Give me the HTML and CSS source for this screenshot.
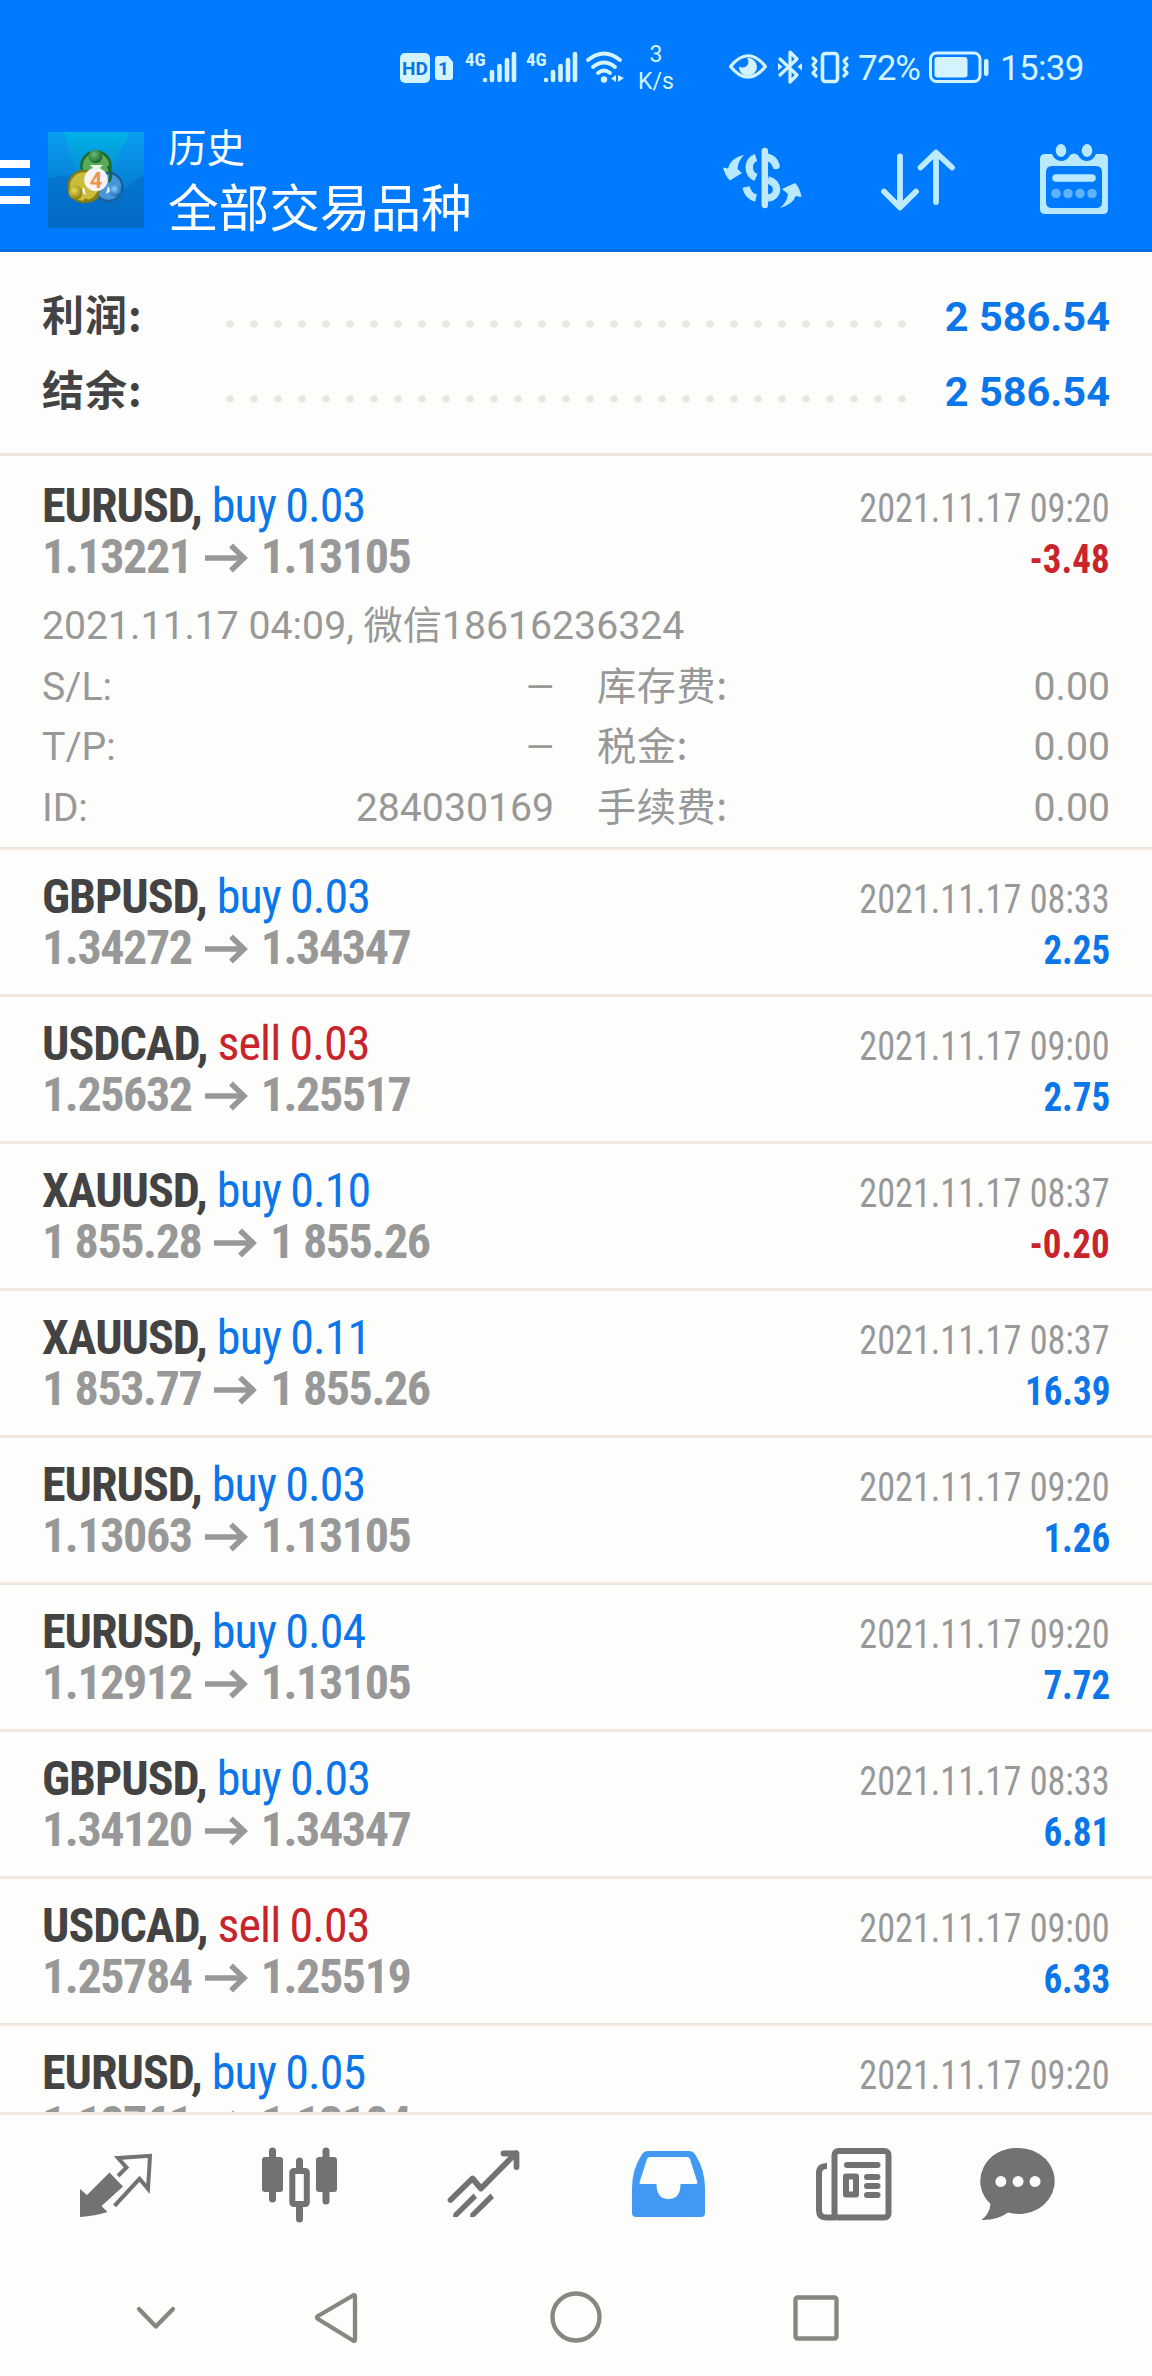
FILE: index.html
```html
<!DOCTYPE html>
<html lang="zh-CN">
<head>
<meta charset="utf-8">
<title>历史</title>
<link rel="stylesheet" href="styles.css">
</head>
<body>
<div class="screen">
  <header class="header">
    <div class="status">
      <svg class="st-sim" width="56" height="34" viewBox="399 52 56 34">
        <rect x="400" y="53" width="30" height="30" rx="5" fill="#d3f4ff"/>
        <path d="M437 56h11l5 6v15a3 3 0 0 1-3 3h-12a3 3 0 0 1-3-3V59a3 3 0 0 1 2-3z" fill="#d3f4ff"/>
        <text x="415" y="75" class="st-hd" text-anchor="middle">HD</text>
        <text x="443.500" y="75" class="st-hd" text-anchor="middle">1</text>
      </svg>
      <svg class="st-cell" width="53" height="34" viewBox="465 51 53 34">
        <text x="465" y="65.500" class="st-4g">4G</text>
        <path d="M485 80v0M492 72v8M499.500 66v14M507 60v20M514 54v26" stroke="#d3f4ff" stroke-width="4.600" stroke-linecap="round"/>
      </svg>
      <svg class="st-cell2" width="53" height="34" viewBox="465 51 53 34">
        <text x="465" y="65.500" class="st-4g">4G</text>
        <path d="M485 80v0M492 72v8M499.500 66v14M507 60v20M514 54v26" stroke="#d3f4ff" stroke-width="4.600" stroke-linecap="round"/>
      </svg>
      <svg class="st-wifi" width="40" height="34" viewBox="585 50 40 34">
        <path d="M588 60Q604 47 620 60M593 67Q604 58 615 67M598 73Q604 68 610 73" fill="none" stroke="#d3f4ff" stroke-width="3.800" stroke-linecap="round"/>
        <circle cx="604" cy="79.500" r="3.200" fill="#d3f4ff"/>
        <path d="M616 75v7l-5-3.500zM618 75v7l6-4z" fill="#d3f4ff"/>
      </svg>
      <div class="st-speed"><span>3</span><span>K/s</span></div>
      <svg class="st-eye" width="40" height="30" viewBox="728 52 40 30">
        <path d="M730.500 66.500Q748 45 765.500 66.500Q748 88 730.500 66.500z" fill="none" stroke="#d3f4ff" stroke-width="3.200" stroke-linejoin="round"/>
        <path d="M747 58a9 9 0 1 1-8 8c3 3 8 1 9-2 .800-2 .500-4-1-6z" fill="#d3f4ff"/>
      </svg>
      <svg class="st-bt" width="26" height="36" viewBox="777 49 26 36">
        <path d="M780 59l17 16-7 7V52l7 7-17 16" fill="none" stroke="#d3f4ff" stroke-width="3.200" stroke-linejoin="round" stroke-linecap="round"/>
        <path d="M778 63l4.500 3.800-4.500 3.800zM802 63l-4.500 3.800 4.500 3.800z" fill="#d3f4ff"/>
      </svg>
      <svg class="st-vib" width="40" height="34" viewBox="810 50 40 34">
        <rect x="822.500" y="53.500" width="15" height="28" rx="3" fill="none" stroke="#d3f4ff" stroke-width="3.600"/>
        <path d="M813 58l3 3-3 4 3 4-3 4 3 3M847 58l-3 3 3 4-3 4 3 4-3 3" fill="none" stroke="#d3f4ff" stroke-width="3.200" stroke-linecap="round" stroke-linejoin="round"/>
      </svg>
      <span class="st-pct">72%</span>
      <svg class="st-bat" width="62" height="34" viewBox="927 50 62 34">
        <rect x="929.500" y="53" width="49.500" height="28.500" rx="6" fill="none" stroke="#d3f4ff" stroke-width="3"/>
        <rect x="933.500" y="57" width="33" height="20.500" rx="3" fill="#d3f4ff"/>
        <rect x="983" y="59" width="4.500" height="17" rx="2" fill="#d3f4ff"/>
      </svg>
      <span class="st-time">15:39</span>
    </div>
    <div class="toolbar">
      <div class="menu"><i></i><i></i><i></i></div>
      <svg class="logo" width="96" height="96" viewBox="0 0 96 96">
        <defs>
          <linearGradient id="bg" x1="0" y1="0" x2="0" y2="1"><stop offset="0" stop-color="#0a9df0"/><stop offset=".5" stop-color="#0684d8"/><stop offset="1" stop-color="#0268c8"/></linearGradient>
          <linearGradient id="ray" x1="0" y1="0" x2="0" y2="1"><stop offset="0" stop-color="#00b2ea"/><stop offset="1" stop-color="#0790cf"/></linearGradient>
          <radialGradient id="gn" cx=".4" cy=".35" r=".7"><stop offset="0" stop-color="#6fbc74"/><stop offset="1" stop-color="#125f28"/></radialGradient>
          <radialGradient id="yl" cx=".4" cy=".35" r=".7"><stop offset="0" stop-color="#e8dc5c"/><stop offset="1" stop-color="#857606"/></radialGradient>
          <radialGradient id="bl" cx=".4" cy=".35" r=".7"><stop offset="0" stop-color="#8ccdff"/><stop offset="1" stop-color="#0c64b4"/></radialGradient>
        </defs>
        <path d="M0 0h96v96H0z" fill="url(#bg)"/>
        <path d="M16 0h66L62 40H28z" fill="url(#ray)"/>
        <path d="M0 46l30-4 30 28 36-28v54H0z" fill="#036ac4" opacity=".6"/>
        <circle cx="48" cy="34" r="14.500" fill="#58ab58" stroke="#1f6a30" stroke-width="2.500"/>
        <circle cx="60.500" cy="55" r="14" fill="#4596dc" stroke="#17609f" stroke-width="2.500"/>
        <circle cx="36" cy="54.500" r="15.500" fill="#c9bd3a" stroke="#837a18" stroke-width="2.500"/>
        <path d="M61 50q4-8-1-16" fill="none" stroke="#1f6a30" stroke-width="3"/>
        <path d="M36 68q8 3 14-4" fill="none" stroke="#837a18" stroke-width="3"/>
        <circle cx="48" cy="47.500" r="11.800" fill="#f6f3fa"/>
        <path d="M42 33h13l-4 4h-5z" fill="#e4f5e4"/>
        <path d="M36 55l2 8-5-3zM60 54l-2 8 5-3z" fill="#eef6f0"/>
        <circle cx="47.500" cy="24.500" r="6.800" fill="url(#gn)"/>
        <circle cx="27.500" cy="60.500" r="7" fill="url(#yl)"/>
        <circle cx="67.500" cy="58.500" r="6" fill="url(#bl)"/>
        <text x="48" y="55.500" class="logo-4" text-anchor="middle">4</text>
      </svg>
      <div class="titles">
        <div class="title-sm">历史</div>
        <div class="title-lg">全部交易品种</div>
      </div>
      <svg class="ic-cur" width="80" height="62" viewBox="722 147 80 62">
        <path d="M764.800 151v54" stroke="#c3e9fb" stroke-width="6.500" stroke-linecap="round"/>
        <path d="M756 157.500c-9 3-9 16 0 20M746 187q2 9 10 11" fill="none" stroke="#b9e9ff" stroke-width="7.500"/>
        <path d="M768 157.500q6 1.500 8 8" fill="none" stroke="#b9e9ff" stroke-width="7.500" stroke-linecap="round"/>
        <path d="M768 180c12 3 11 17 0 18" fill="none" stroke="#b9e9ff" stroke-width="7.500"/>
        <path d="M744 155q-6 6-6.500 14l4.500 4-12 7.500q-5-5-7-13l5 1q3-11 16-13.500zM780 208q7-6 8-14l-6-5 13-6q5 5 6.500 14l-6-1q-2 8-15.500 12z" fill="#b9e9ff"/>
      </svg>
      <svg class="ic-sort" width="76" height="66" viewBox="880 146 76 66">
        <path d="M900 156.500v50M884 191.500l16 16 16-16M936 202v-49M920.500 167.500l15.500-15 16 15" fill="none" stroke="#bdeaff" stroke-width="5.800" stroke-linecap="round" stroke-linejoin="round"/>
      </svg>
      <svg class="ic-cal" width="72" height="74" viewBox="1038 142 72 74">
        <path fill-rule="evenodd" d="M1045 154h7q3 7 9 7t9-6q4-3 8 0 3 6 9 6t9-7h7q5 0 5 5v50q0 5-5 5h-58q-5 0-5-5v-50q0-5 5-5zm7 12q-6 0-6 6v30q0 6 6 6h44q6 0 6-6v-30q0-6-6-6z" fill="#b9e9ff"/>
        <ellipse cx="1061" cy="150.500" rx="5.300" ry="6.500" fill="#b9e9ff"/><ellipse cx="1087" cy="150.500" rx="5.300" ry="6.500" fill="#b9e9ff"/>
        <path d="M1056 178h36" stroke="#b9e9ff" stroke-width="7.500" stroke-linecap="round"/>
        <g fill="#5eb4ff"><circle cx="1056" cy="193.500" r="4.800"/><circle cx="1068" cy="193.500" r="4.800"/><circle cx="1080" cy="193.500" r="4.800"/><circle cx="1092" cy="193.500" r="4.800"/></g>
      </svg>
    </div>
  </header>

  <section class="summary">
    <div class="sum-row"><span class="sum-label">利润:</span><span class="dots"></span><span class="sum-val">2 586.54</span></div>
    <div class="sum-row"><span class="sum-label">结余:</span><span class="dots"></span><span class="sum-val">2 586.54</span></div>
  </section>

  <main class="list">
    <article class="deal open">
      <div class="line"><span class="name"><b>EURUSD,</b> <em class="buy">buy 0.03</em></span><time>2021.11.17 09:20</time></div>
      <div class="line"><span class="price">1.13221<svg class="arr" width="43" height="30" viewBox="0 0 43 30"><path d="M0 15h38M26 2.500L39 15 26 27.500"/></svg>1.13105</span><span class="profit neg">-3.48</span></div>
      <div class="details">
        <div class="comment">2021.11.17 04:09, 微信18616236324</div>
        <div class="pair"><span>S/L:</span><span class="dash">—</span></div><div class="pair"><span class="cjk">库存费:</span><span>0.00</span></div>
        <div class="pair"><span>T/P:</span><span class="dash">—</span></div><div class="pair"><span class="cjk">税金:</span><span>0.00</span></div>
        <div class="pair"><span>ID:</span><span>284030169</span></div><div class="pair"><span class="cjk">手续费:</span><span>0.00</span></div>
      </div>
    </article>
    <article class="deal">
      <div class="line"><span class="name"><b>GBPUSD,</b> <em class="buy">buy 0.03</em></span><time>2021.11.17 08:33</time></div>
      <div class="line"><span class="price">1.34272<svg class="arr" width="43" height="30" viewBox="0 0 43 30"><path d="M0 15h38M26 2.500L39 15 26 27.500"/></svg>1.34347</span><span class="profit">2.25</span></div>
    </article>
    <article class="deal">
      <div class="line"><span class="name"><b>USDCAD,</b> <em class="sell">sell 0.03</em></span><time>2021.11.17 09:00</time></div>
      <div class="line"><span class="price">1.25632<svg class="arr" width="43" height="30" viewBox="0 0 43 30"><path d="M0 15h38M26 2.500L39 15 26 27.500"/></svg>1.25517</span><span class="profit">2.75</span></div>
    </article>
    <article class="deal">
      <div class="line"><span class="name"><b>XAUUSD,</b> <em class="buy">buy 0.10</em></span><time>2021.11.17 08:37</time></div>
      <div class="line"><span class="price">1 855.28<svg class="arr" width="43" height="30" viewBox="0 0 43 30"><path d="M0 15h38M26 2.500L39 15 26 27.500"/></svg>1 855.26</span><span class="profit neg">-0.20</span></div>
    </article>
    <article class="deal">
      <div class="line"><span class="name"><b>XAUUSD,</b> <em class="buy">buy 0.11</em></span><time>2021.11.17 08:37</time></div>
      <div class="line"><span class="price">1 853.77<svg class="arr" width="43" height="30" viewBox="0 0 43 30"><path d="M0 15h38M26 2.500L39 15 26 27.500"/></svg>1 855.26</span><span class="profit">16.39</span></div>
    </article>
    <article class="deal">
      <div class="line"><span class="name"><b>EURUSD,</b> <em class="buy">buy 0.03</em></span><time>2021.11.17 09:20</time></div>
      <div class="line"><span class="price">1.13063<svg class="arr" width="43" height="30" viewBox="0 0 43 30"><path d="M0 15h38M26 2.500L39 15 26 27.500"/></svg>1.13105</span><span class="profit">1.26</span></div>
    </article>
    <article class="deal">
      <div class="line"><span class="name"><b>EURUSD,</b> <em class="buy">buy 0.04</em></span><time>2021.11.17 09:20</time></div>
      <div class="line"><span class="price">1.12912<svg class="arr" width="43" height="30" viewBox="0 0 43 30"><path d="M0 15h38M26 2.500L39 15 26 27.500"/></svg>1.13105</span><span class="profit">7.72</span></div>
    </article>
    <article class="deal">
      <div class="line"><span class="name"><b>GBPUSD,</b> <em class="buy">buy 0.03</em></span><time>2021.11.17 08:33</time></div>
      <div class="line"><span class="price">1.34120<svg class="arr" width="43" height="30" viewBox="0 0 43 30"><path d="M0 15h38M26 2.500L39 15 26 27.500"/></svg>1.34347</span><span class="profit">6.81</span></div>
    </article>
    <article class="deal">
      <div class="line"><span class="name"><b>USDCAD,</b> <em class="sell">sell 0.03</em></span><time>2021.11.17 09:00</time></div>
      <div class="line"><span class="price">1.25784<svg class="arr" width="43" height="30" viewBox="0 0 43 30"><path d="M0 15h38M26 2.500L39 15 26 27.500"/></svg>1.25519</span><span class="profit">6.33</span></div>
    </article>
    <article class="deal">
      <div class="line"><span class="name"><b>EURUSD,</b> <em class="buy">buy 0.05</em></span><time>2021.11.17 09:20</time></div>
      <div class="line"><span class="price">1.12761<svg class="arr" width="43" height="30" viewBox="0 0 43 30"><path d="M0 15h38M26 2.500L39 15 26 27.500"/></svg>1.13104</span></div>
    </article>
  </main>

  <nav class="tabs">
    <svg class="t1" width="76" height="74" viewBox="78 2147 76 74">
      <path d="M109.500 2172.500l13.500 14-21.500 19.500 6 6q-12 4-27.500 5V2189l7 6z" fill="#727272"/>
      <path d="M118 2176l8.500-8.500-8.500-9.500 32-2.200-2 33-8.500-10-25 27" fill="none" stroke="#727272" stroke-width="4"/>
    </svg>
    <svg class="t2" width="76" height="76" viewBox="261 2147 76 76">
      <path d="M272.500 2151v48M326 2151v50" stroke="#727272" stroke-width="7" stroke-linecap="round"/>
      <rect x="262" y="2157" width="21" height="35" rx="3" fill="#727272"/><rect x="316" y="2157" width="21" height="35" rx="3" fill="#727272"/>
      <path d="M299.500 2161v9M299.500 2205v14" stroke="#727272" stroke-width="7" stroke-linecap="round"/>
      <rect x="292.300" y="2171" width="14.500" height="33" rx="1.500" fill="none" stroke="#727272" stroke-width="6"/>
    </svg>
    <svg class="t3" width="76" height="72" viewBox="446 2148 76 72">
      <path d="M450.500 2200l22-21.500 8.500 10L516 2153M503.500 2153.500H516.500V2167" fill="none" stroke="#727272" stroke-width="5.800" stroke-linecap="round" stroke-linejoin="round"/>
      <path d="M453 2217h4.500L477 2198l-3.500-4.500-20 20zM470 2217h4.500L494 2198l-3.500-4.500-20 20z" fill="#727272"/>
    </svg>
    <svg class="t4" width="76" height="72" viewBox="630 2148 76 72">
      <path fill-rule="evenodd" d="M648 2151h41q4 0 6.500 4Q705 2170 705 2188v25q0 4-4 4h-65q-4 0-4-4v-25q0-18 9.500-33 2.500-4 6.500-4zm2 6q-2 0-3 2l-7 22q-1.500 3 1 3h15.500q0 15 12 15t12-15H696q2 0 1-3l-7-22q-1-2-3-2z" fill="#4199f4"/>
    </svg>
    <svg class="t5" width="80" height="76" viewBox="814 2146 80 76">
      <rect x="834.500" y="2151" width="54" height="66.500" rx="4" fill="none" stroke="#727272" stroke-width="6"/>
      <path d="M827 2166q-8 0-8 7v37q0 7.500 7 7.500h10" fill="none" stroke="#727272" stroke-width="6"/>
      <path d="M847 2165h30.500M867 2177h10.500M867 2186h10.500M867 2195h10.500" stroke="#727272" stroke-width="6" stroke-linecap="round"/>
      <rect x="846" y="2176.500" width="10" height="18" fill="none" stroke="#727272" stroke-width="6" stroke-linejoin="round"/>
    </svg>
    <svg class="t6" width="76" height="76" viewBox="980 2146 76 76">
      <path fill-rule="evenodd" d="M1018 2148a36 33 0 1 1-10 64.500q-11 8-26.500 7.500 8-6 9-16A36 33 0 0 1 1018 2148zM1000.800 2176a5.500 5.500 0 1 0 .1 11a5.500 5.500 0 0 0-.1-11zm17.200 0a5.500 5.500 0 1 0 .1 11a5.500 5.500 0 0 0-.1-11zm17 0a5.500 5.500 0 1 0 .1 11a5.500 5.500 0 0 0-.1-11z" fill="#727272"/>
    </svg>
  </nav>
  <div class="sysnav">
    <svg class="s1" width="42" height="28" viewBox="135 2304 42 28"><path d="M139 2309l16.800 17.500L173 2309"/></svg>
    <svg class="s2" width="48" height="56" viewBox="312 2290 48 56"><path d="M353 2295.500q2-1 2 1v43q0 2-2 1l-35-21.500q-2-1.500 0-3z"/></svg>
    <svg class="s3" width="56" height="56" viewBox="548 2289 56 56"><circle cx="576" cy="2317" r="23.500"/></svg>
    <svg class="s4" width="50" height="50" viewBox="791 2293 50 50"><rect x="795.500" y="2297.500" width="41" height="41" rx="2"/></svg>
  </div>
</div>
</body>
</html>
```
FILE: styles.css
```css
* { box-sizing: border-box; }
body { margin: 0; background: #fefefe; font-family: Roboto, "Noto Sans CJK SC", sans-serif; }
svg { display: block; flex: none; overflow: visible; }
.screen { width: 1152px; height: 2376px; display: flex; flex-direction: column; overflow: hidden; background: #fdfefc; }

.header { height: 252px; flex: none; background: #007aff; border-bottom: 3px solid #0a6fdc; }
.status { height: 116px; padding: 50px 0 0 399px; display: flex; align-items: flex-start; color: #d3f4ff; }
.st-sim { margin-top: 2px; }
.st-hd { font: 700 19px "Roboto", sans-serif; fill: #0a72e6; }
.st-4g { font: 700 19px "Roboto", sans-serif; font-stretch: 75%; fill: #d3f4ff; }
.st-cell { margin: 1px 0 0 10px; }
.st-cell2 { margin: 1px 0 0 8px; }
.st-wifi { margin-left: 6px; }
.st-speed { width: 60px; margin: -9px 0 0 1px; display: flex; flex-direction: column; align-items: center; font-size: 23px; line-height: 27px; }
.st-eye { margin: 2px 0 0 42px; }
.st-bt { margin: -1px 0 0 9px; }
.st-vib { margin-left: 7px; }
.st-pct, .st-time { font-size: 35px; line-height: 38px; font-weight: 400; white-space: nowrap; }
.st-pct { width: 70px; margin-left: 8px; letter-spacing: -1px; }
.st-time { margin-left: 10px; letter-spacing: -.7px; }

.toolbar { height: 133px; display: flex; align-items: flex-start; }
.menu { width: 30px; padding-top: 44px; display: flex; flex-direction: column; gap: 10px; }
.menu i { display: block; height: 8px; background: #fff; }
.logo { margin: 16px 0 0 18px; }
.logo-4 { font: 700 22px "Roboto", sans-serif; fill: #f0944e; }
.titles { width: 553px; margin-left: 24px; color: #fff; white-space: nowrap; font-family: "Noto Sans CJK SC", sans-serif; }
.title-sm { font-size: 38.500px; line-height: 56px; padding-top: 1px; }
.title-lg { font-size: 50.600px; line-height: 64px; }
.ic-cur { margin: 31px 0 0 1px; }
.ic-sort { margin: 30px 0 0 78px; }
.ic-cal { margin: 26px 0 0 82px; }

.summary { height: 204px; flex: none; padding: 23px 42px 0 42px; border-bottom: 3px solid #efe4dc; }
.sum-row { height: 75px; display: flex; align-items: baseline; line-height: 75px; }
.sum-label { width: 176px; font: 700 42px/75px "Noto Sans CJK SC", sans-serif; letter-spacing: 1px; color: #434343; }
.dots { width: 696px; height: 8px; align-self: center; margin-top: 23px; background: radial-gradient(circle at 12px 4px, #ece6df 3.200px, transparent 4.200px) repeat-x 0 0 / 24px 8px; }
.sum-val { margin-left: auto; font-size: 41.500px; font-weight: 700; color: #0b76ea; }

.list { height: 1656px; flex: none; overflow: hidden; }
.deal { height: 147px; padding: 21px 42px 0 42px; border-bottom: 3px solid #f2e6de; }
.deal.open { height: 394px; padding-top: 24px; }
.line { height: 51px; display: flex; justify-content: space-between; align-items: baseline; line-height: 51px; white-space: nowrap; font-stretch: 75%; }
.name { font-size: 48px; color: #434343; word-spacing: -1px; }
.name b { letter-spacing: -1px; }
.name em { font-style: normal; letter-spacing: -.9px; }
.buy { color: #0b76ea; }
.sell { color: #c9232b; }
.price { font-size: 48px; font-weight: 700; letter-spacing: -1.400px; color: #989898; }
.arr { display: inline-block; vertical-align: 0; margin: 0 13px 0 13px; }
.arr path { fill: none; stroke: #989898; stroke-width: 5.500px; }
time { font-size: 40px; color: #989898; transform: scaleX(.905); transform-origin: right; }
.profit { font-size: 40px; font-weight: 700; color: #0b76ea; transform: scaleX(.925); transform-origin: right; }
.profit.neg { color: #c9232b; }
.details { margin-top: 14px; display: grid; grid-template-columns: 512px 513px; column-gap: 43px; font-size: 39.200px; line-height: 60.700px; color: #989898; }
.comment { grid-column: 1 / 3; height: 60.700px; white-space: nowrap; }
.pair { height: 60.700px; display: flex; justify-content: space-between; align-items: baseline; }
.dash { font-size: 36px; }
.cjk { font-family: "Noto Sans CJK SC", sans-serif; line-height: 50px; letter-spacing: .6px; }

.tabs { height: 142px; flex: none; border-top: 3px solid #f2e6de; padding: 31px 0 0 78px; display: flex; align-items: flex-start; }
.t1 { margin-top: 1px; }
.t2 { margin: 1px 0 0 107px; }
.t3 { margin: 2px 0 0 109px; }
.t4 { margin: 2px 0 0 108px; }
.t5 { margin: 0 0 0 108px; }
.t6 { margin: 0 0 0 86px; }
.sysnav { height: 122px; padding: 35px 0 0 135px; display: flex; align-items: flex-start; fill: none; stroke: #858781; stroke-width: 4.300px; stroke-linecap: round; stroke-linejoin: round; }
.s1 { margin-top: 15px; }
.s2 { margin: 1px 0 0 135px; }
.s3 { margin-left: 188px; }
.s4 { margin: 4px 0 0 187px; }
```
